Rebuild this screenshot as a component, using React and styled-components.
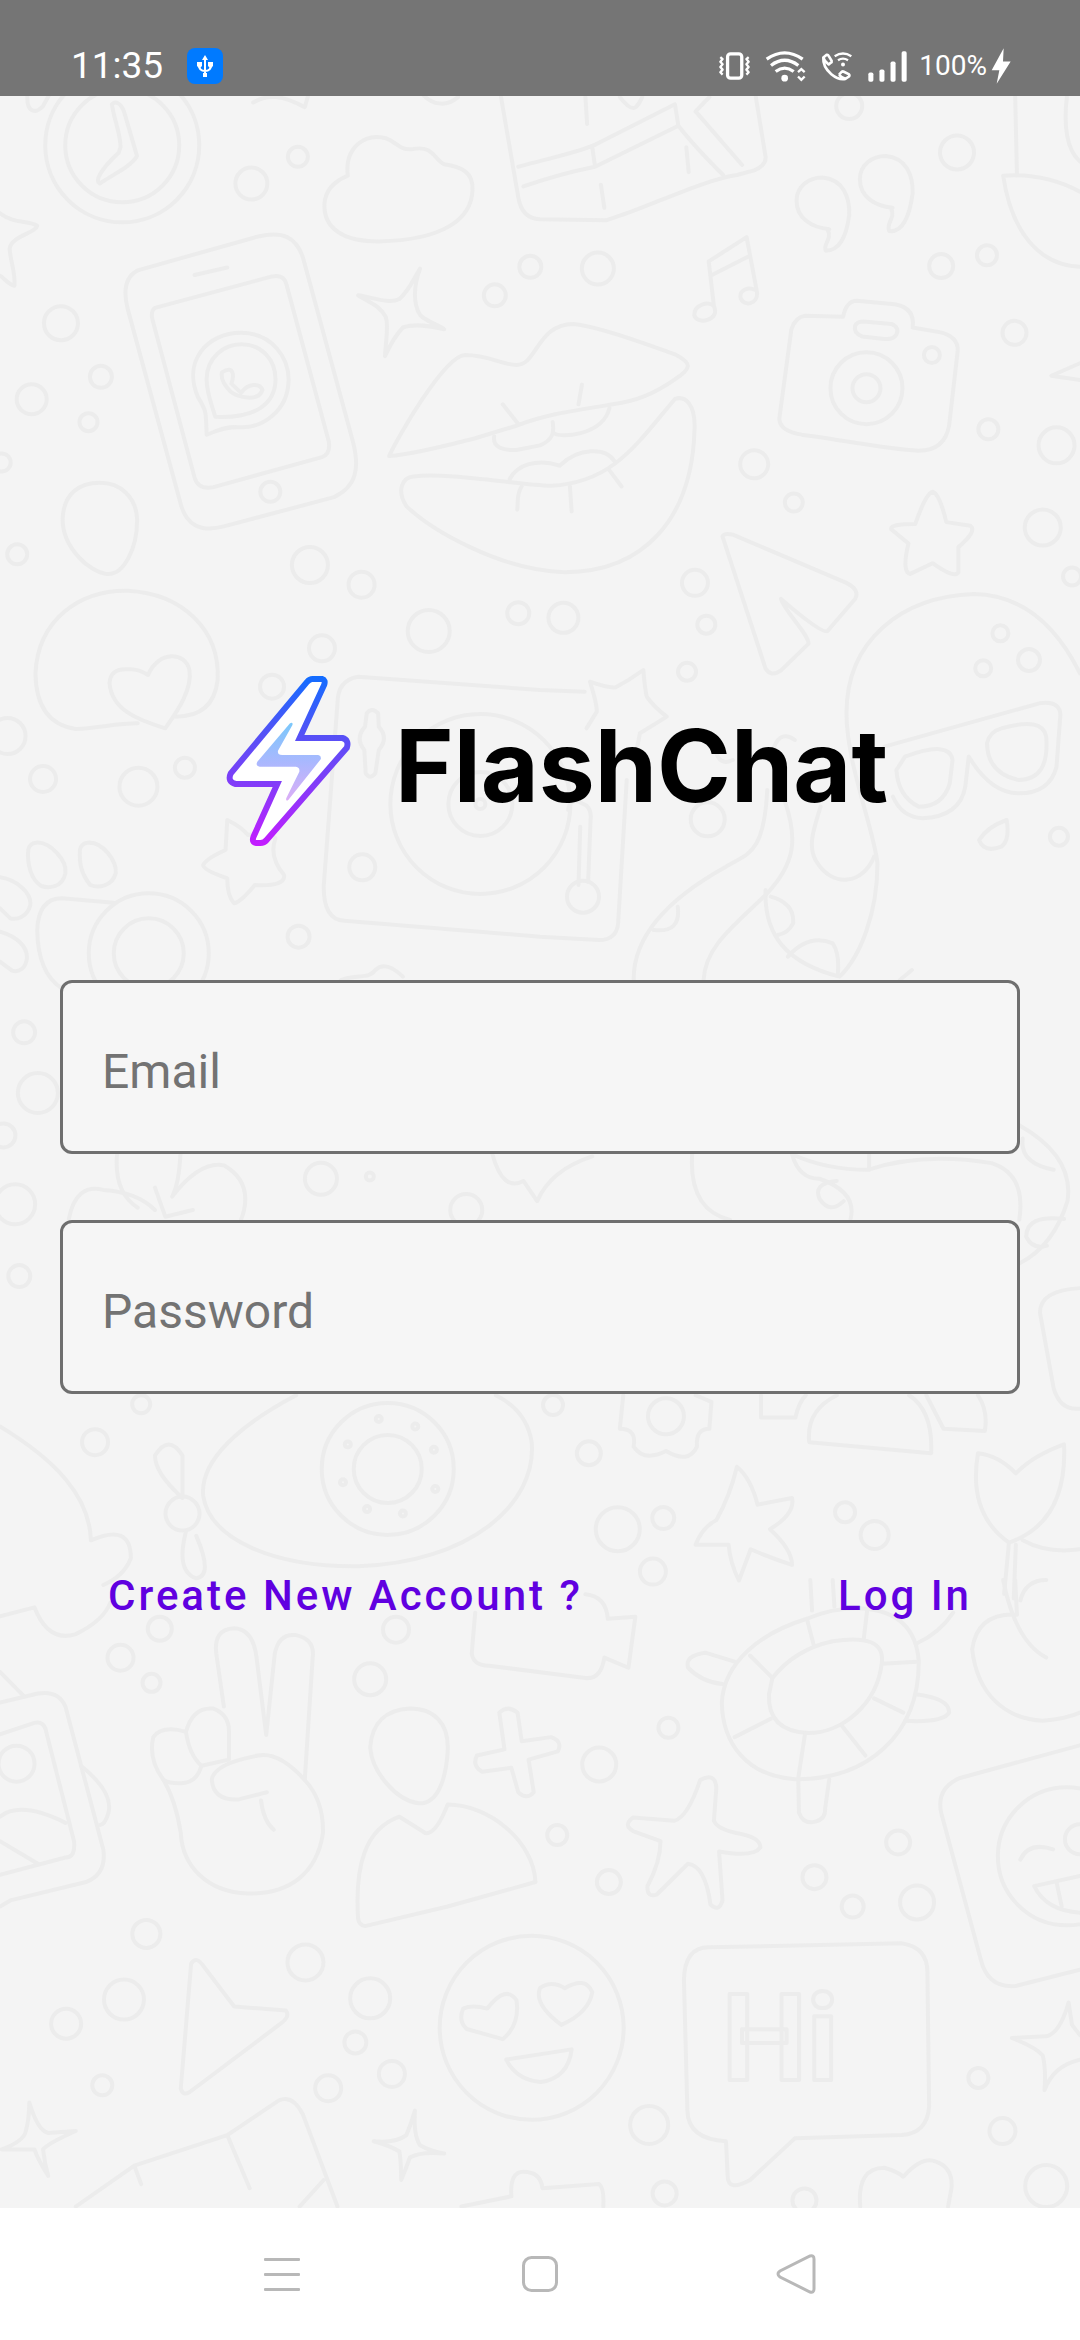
import React from "react";
import styled, { createGlobalStyle } from "styled-components";

const GlobalStyle = createGlobalStyle`
  *, *::before, *::after { box-sizing: border-box; }
  body {
    margin: 0;
    background: #f4f4f4;
    font-family: Roboto, "Noto Sans", sans-serif;
  }
`;

const Screen = styled.div`
  display: flex;
  flex-direction: column;
  min-height: 100vh;
`;

const StatusBar = styled.header`
  display: flex;
  align-items: center;
  justify-content: space-between;
  height: 96px;
  padding: 36px 69px 0 71px;
  background: #757575;
  color: #fff;
`;

const StatusGroup = styled.div`
  display: flex;
  align-items: center;
  gap: ${(p) => p.$gap}px;
`;

const Clock = styled.time`
  font-size: 37px;
  line-height: 60px;
`;

const Battery = styled.span`
  font-size: 28px;
  line-height: 60px;
`;

const Icon = styled.svg`
  display: block;
  flex: none;
  width: ${(p) => p.$w}px;
  height: ${(p) => p.$h}px;
  overflow: visible;
`;

const Main = styled.main`
  position: relative;
  flex: 1;
  overflow: hidden;
`;

const Backdrop = styled.svg`
  position: absolute;
  inset: 0;
  width: 100%;
  height: 100%;
  fill: none;
  stroke: #ececec;
  stroke-width: 4px;
  stroke-linecap: round;
  stroke-linejoin: round;

  path, ellipse { vector-effect: non-scaling-stroke; }
`;

const Greeting = styled.text`
  font-family: Roboto, "Liberation Sans", sans-serif;
  font-size: 120px;
  font-weight: 700;
`;

const Content = styled.form`
  position: relative;
  display: flex;
  flex-direction: column;
  padding: 580px 60px 120px;
`;

const Brand = styled.div`
  display: flex;
  align-items: flex-end;
  gap: 44px;
  padding-left: 167px;
`;

const Wordmark = styled.h1`
  margin: 0;
  color: #000;
  font-family: Inter, "Open Sans", sans-serif;
  font-size: 100px;
  font-weight: 700;
  line-height: 160px;
`;

const Fields = styled.div`
  display: flex;
  flex-direction: column;
  gap: 66px;
  margin-top: 134px;
`;

const Field = styled.input`
  width: 100%;
  height: 174px;
  padding: 8px 39px 0;
  border: 3px solid #6f6f6f;
  border-radius: 12px;
  outline: none;
  background: #f6f6f6;
  color: #222;
  font-family: inherit;
  font-size: 48px;

  &::placeholder { color: #737373; opacity: 1; }
`;

const Actions = styled.div`
  display: flex;
  justify-content: space-between;
  margin-top: 129px;
`;

const TextButton = styled.button`
  height: 144px;
  padding: 0 48px;
  border: 0;
  background: none;
  color: #6000e0;
  font-family: inherit;
  font-size: 42px;
  font-weight: 500;
  letter-spacing: 3px;
`;

const NavBar = styled.nav`
  display: flex;
  align-items: center;
  justify-content: center;
  gap: 174px;
  height: 132px;
  background: #fff;
`;

const NavButton = styled.button`
  display: grid;
  place-items: center;
  width: 84px;
  height: 84px;
  padding: 0;
  border: 0;
  background: none;
  color: #b8b8b8;
`;

/* Doodle sheets: each has an origin on the 1080-wide canvas and its own drawing
   units; dots are [cx, cy, radius in canvas pixels]. */
const sheets = [
  {
    x: 0, y: 90, sx: 2.904, sy: 2.8,
    dots: [
      [355, 155, 77], [355, 155, 57], [730, 262, 16], [865, 187, 10], [177, 653, 17], [92, 866, 15],
      [293, 803, 11], [257, 930, 9], [5, 1043, 9], [50, 1300, 10], [1540, 495, 11], [1437, 575, 11],
      [900, 1330, 18], [1050, 1385, 13], [1245, 1515, 21], [1505, 1465, 11], [785, 1125, 10],
    ],
    paths: [
      "M325 40C335 30 350 35 360 60L398 185C380 215 330 235 290 262C275 255 290 225 345 175L350 160C350 120 330 80 325 40",
      "M80 10C75 60 100 70 125 45L145 10M735 35C780 10 820 15 885 48L895 15M1230 15C1260 45 1300 45 1330 20",
      "M1010 240C1000 160 1060 120 1120 135C1160 150 1160 170 1200 165C1260 155 1260 195 1290 208C1340 215 1375 230 1372 280C1370 360 1290 420 1100 424C1000 424 940 390 942 320C945 270 985 250 1010 240Z",
      "M0 345C40 375 80 365 108 380C105 400 30 410 28 445C30 480 45 510 42 548C25 545 10 525 0 520",
      "M400 505L750 410C820 395 860 410 880 470L1025 985C1045 1060 1035 1110 970 1140L650 1222C580 1240 540 1215 525 1160L370 610C355 550 370 520 400 505Z",
      "M450 610L790 522Q825 515 832 545L955 985Q960 1020 935 1028L620 1112Q575 1120 565 1085L442 640Q438 618 450 610ZM565 518L660 497",
      "M600 965C598 900 600 900 575 860C530 760 600 680 700 680C790 680 840 750 838 815C835 900 760 950 690 944C650 943 630 955 600 965Z",
      "M625 915C615 880 600 850 600 810C600 750 650 712 700 712C760 712 800 755 800 810C800 880 740 920 625 915Z",
      "M645 790C680 770 680 800 672 822L700 848C720 820 755 820 762 840C750 875 690 860 670 845C645 820 640 805 645 790Z",
      "M1220 500C1200 550 1200 600 1220 630C1240 650 1270 655 1290 670C1250 660 1200 655 1170 665C1145 690 1130 720 1118 745C1120 700 1130 660 1120 635C1100 600 1070 595 1040 575C1080 580 1130 600 1160 585C1190 560 1200 530 1220 500Z",
      "M290 1100C350 1100 395 1140 398 1200C400 1280 360 1360 310 1355C260 1350 180 1280 182 1200C185 1130 230 1100 290 1100Z",
      "M1130 1025C1150 980 1290 745 1350 742C1420 742 1460 770 1500 770C1560 770 1560 655 1665 655C1740 660 1900 720 1960 740C2010 765 2010 780 1960 810C1900 850 1850 870 1780 880C1650 900 1580 910 1500 940L1380 975C1300 995 1200 1020 1130 1025Z",
      "M1960 865C1990 855 2020 880 2017 950C2010 1200 1870 1350 1640 1350C1450 1345 1250 1230 1180 1165C1150 1120 1170 1085 1200 1082C1300 1070 1500 1105 1600 1108C1780 1100 1850 990 1960 865Z",
      "M1435 970C1430 1000 1460 1010 1500 1008L1568 995C1605 980 1610 960 1605 930M1608 960C1620 975 1750 970 1770 890M1480 1090C1500 1050 1560 1030 1625 1052C1680 1000 1760 1000 1785 1040",
      "M1460 880L1505 935M1515 1110C1500 1130 1505 1150 1502 1175M1690 825L1680 880M1655 1110L1660 1180M1770 1065L1805 1110",
      "M1455 20L1505 300Q1515 360 1568 362L1760 365L1800 352C1900 320 2050 250 2140 238L2190 225Q2230 210 2222 180L2195 20",
      "M1505 215C1600 190 1700 170 1735 150L1960 40L1970 100L1728 215C1650 230 1580 250 1520 270M1970 100C2010 150 2050 190 2100 238M2060 20L2020 60L2155 210M1720 160L1728 215",
      "M1745 265L1755 330M1993 160L2000 230M1700 20L1705 95M1800 20C1840 70 1850 50 1865 20",
    ],
  },
  {
    x: 540, y: 90, sx: 2.904, sy: 2.8,
    dots: [
      [168, 500, 16], [1211, 175, 17], [1165, 493, 12], [1298, 463, 10], [1378, 680, 12], [1302, 950, 10],
      [1500, 995, 18], [1460, 1225, 18], [1545, 1362, 9], [622, 1048, 14], [737, 1155, 9], [450, 1380, 13],
      [483, 1497, 9], [68, 1478, 15], [898, 45, 13], [1138, 742, 8], [948, 835, 36], [948, 835, 14],
    ],
    paths: [
      "M840 390C790 385 745 360 745 310C745 270 780 245 820 245C880 250 900 300 898 350C890 410 870 450 830 450C820 430 850 420 835 390",
      "M1024 330C974 325 929 300 929 250C929 210 964 185 1004 185C1064 190 1084 240 1082 290C1074 350 1054 400 1014 395C1004 370 1034 360 1019 330",
      "M1380 20L1385 235M1530 20C1520 100 1530 170 1568 200M1568 285C1500 250 1420 235 1345 240C1370 400 1450 490 1568 495M1568 765L1485 800L1568 812",
      "M505 605C525 645 455 660 448 630C448 600 490 590 505 605L490 480L600 412L630 565C635 600 590 610 582 580C580 560 605 550 625 560M495 520L608 465",
      "M695 920L730 670Q742 635 770 632L880 635Q890 590 920 590L1030 600Q1090 610 1082 665L1160 678Q1215 690 1213 730L1188 940Q1175 1010 1100 1010C1000 1005 850 975 760 965Q695 955 695 920Z",
      "M940 648L1020 655Q1045 665 1035 685Q1025 700 1000 697L935 690Q910 680 915 660Q920 648 940 648Z",
      "M1140 1125Q1160 1130 1180 1210L1250 1220Q1270 1235 1215 1280L1215 1350Q1205 1370 1140 1325L1075 1355Q1050 1350 1070 1270L1020 1230Q1015 1215 1090 1215Q1120 1130 1140 1125Z",
      "M530 1250Q535 1240 560 1245L890 1380Q930 1400 915 1425L835 1515Q820 1525 700 1425C710 1460 778 1520 780 1550L700 1625Q670 1645 655 1620Z",
    ],
  },
  {
    x: 0, y: 580, sx: 2.904, sy: 3,
    dots: [
      [22, 468, 18], [125, 597, 13], [402, 620, 19], [537, 563, 10], [790, 320, 12], [935, 205, 13],
      [867, 1070, 11], [1052, 862, 13],
      [432, 1120, 60], [432, 1120, 35], [1395, 672, 90], [1395, 672, 32], [1395, 672, 5], [1693, 950, 16],
    ],
    paths: [
      "M105 788C145 785 195 840 190 880C180 925 140 925 120 918C90 900 78 850 82 810Q85 790 105 788ZM255 788C300 785 340 845 336 880C325 920 285 925 262 915C235 880 230 850 232 810Q235 790 255 788Z",
      "M0 892C50 900 92 940 88 975C80 1010 50 1020 30 1015L0 985M0 1055C50 1070 80 1100 78 1135C75 1165 55 1178 35 1172L0 1145",
      "M1065 400Q1080 380 1098 400L1100 440Q1130 475 1100 510L1090 580Q1075 600 1062 580L1058 510Q1030 475 1060 440Z",
      "M400 430C340 430 280 445 220 447Q105 430 103 280C110 120 230 30 370 32C530 40 640 150 632 300Q620 410 510 410",
      "M370 268Q320 265 318 310C325 390 400 420 480 445C510 400 560 330 550 270C540 215 460 210 430 285Q400 265 370 268Z",
      "M180 1225Q110 1180 108 1050Q112 955 180 955L330 968",
      "M660 720Q700 740 720 765Q780 750 800 775Q780 830 825 885Q830 920 740 915Q700 965 680 970Q660 950 660 895Q590 870 590 855Q600 835 655 810Z",
      "M1698 335L1568 330L1040 290Q980 300 980 370L940 920Q940 1020 1000 1022L1568 1070L1740 1080Q1790 1080 1795 1030L1820 600",
      "M1650 690Q1655 650 1690 670Q1720 680 1715 720L1708 905M1680 915L1685 740M990 1200C1040 1180 1070 1200 1090 1170Q1120 1140 1170 1190",
    ],
  },
  {
    x: 540, y: 580, sx: 2.904, sy: 3,
    dots: [[427, 275, 9], [487, 718, 17], [1337, 160, 8], [1420, 240, 11], [1287, 265, 8], [1507, 770, 9]],
    paths: [
      "M135 445L165 395Q165 370 145 305Q200 325 220 322Q260 300 300 270Q305 330 310 350Q330 380 368 410Q330 435 290 460Q285 490 280 510",
      "M1568 280C1520 180 1430 45 1260 42C1050 50 890 180 890 400C890 550 970 750 980 850C980 1000 930 1130 870 1190C720 1150 650 1070 655 930",
      "M1000 500L1450 370Q1520 360 1510 420L1500 560Q1480 640 1390 640Q1310 640 1245 530L1235 620Q1220 710 1110 715Q1050 710 1025 650",
      "M1060 530Q1190 480 1198 540L1190 610Q1170 680 1100 680Q1040 650 1035 570ZM1340 445Q1460 410 1470 470Q1480 600 1390 600Q1300 580 1298 490Q1305 455 1340 445Z",
      "M1275 780Q1300 740 1355 720Q1365 780 1340 800Q1290 820 1275 780Z",
      "M660 630C650 830 600 820 540 860C400 940 270 1050 272 1200M710 660C750 780 740 850 660 940C560 1040 480 1100 475 1200M815 680C790 760 780 800 800 840C850 930 940 910 970 830",
      "M330 1050Q410 1060 400 980M670 950Q740 970 735 1030Q720 1060 690 1065M720 1130Q780 1060 850 1090Q870 1120 865 1180M1045 1200L1080 1170M680 500Q700 450 740 480M510 510Q520 560 560 540",
    ],
  },
  {
    x: 0, y: 960, sx: 1.452, sy: 2.24,
    dots: [
      [35, 162, 11], [55, 298, 20], [5, 393, 12], [22, 547, 20], [28, 708, 11], [205, 995, 9], [138, 1080, 13],
      [466, 490, 16], [537, 485, 4], [677, 560, 16], [803, 997, 10], [855, 1105, 12], [897, 1275, 22],
      [963, 1250, 11], [948, 1370, 13], [1227, 1237, 10], [1270, 1288, 14], [232, 1498, 12], [175, 1563, 13],
      [575, 1500, 13], [563, 1140, 66], [563, 1140, 34], [550, 1028, 3], [603, 1045, 3], [505, 1085, 3],
      [630, 1097, 3], [498, 1170, 3], [632, 1185, 3], [533, 1230, 3], [585, 1240, 3], [265, 1240, 17],
      [967, 1022, 18],
    ],
    paths: [
      "M100 580Q110 500 150 515Q200 520 225 560M170 435Q165 520 200 555M262 435Q260 500 250 530Q290 450 325 460Q370 500 350 582M225 510L240 575L280 560",
      "M715 435Q730 520 760 495L780 540Q800 470 860 440",
      "M1005 435Q1000 560 1060 582M1235 580Q1245 520 1190 490Q1160 490 1150 435Q1200 470 1260 470Q1340 430 1440 455Q1490 480 1480 582M1480 370Q1560 440 1550 540Q1530 640 1480 680",
      "M1215 495Q1180 500 1190 535Q1205 570 1225 540M1485 400Q1480 455 1530 470M1545 580Q1490 570 1490 620Q1500 650 1520 640M1262 435L1262 470",
      "M1568 735Q1510 740 1510 790L1530 960Q1540 1010 1568 1005",
      "M430 975C350 1040 290 1120 295 1200C305 1300 400 1360 520 1358C680 1350 780 1220 772 1080Q765 1010 720 975",
      "M265 1205Q225 1150 225 1110Q245 1060 265 1110ZM270 1280Q255 1370 285 1385Q310 1380 285 1290",
      "M0 1045C80 1120 130 1200 132 1300Q190 1260 190 1340Q180 1380 150 1400M0 1470L50 1450Q70 1530 110 1510Q150 1480 160 1440",
      "M905 975L900 1050Q925 1050 920 1090Q935 1125 967 1100Q1000 1130 1012 1090Q1010 1050 1030 1050L1033 990L1010 975",
      "M1105 975L1105 1025L1155 1025Q1160 990 1170 975M1215 975Q1170 1010 1175 1080L1352 1105Q1355 1010 1320 975M1345 975L1370 1050L1430 1055Q1435 1010 1420 975",
      "M1070 1135Q1090 1160 1100 1220L1150 1205Q1155 1240 1118 1275Q1150 1320 1150 1355Q1120 1340 1090 1320L1073 1390Q1060 1350 1058 1310L1010 1310Q1020 1270 1040 1255Q1060 1200 1070 1135Z",
      "M1475 1150Q1450 1110 1420 1105Q1405 1240 1465 1305Q1550 1260 1545 1085Q1500 1110 1475 1150M1465 1305L1458 1420M1475 1310L1472 1430M1568 1320Q1520 1330 1485 1300",
    ],
  },
  {
    x: 0, y: 1580, sx: 2.904, sy: 2.45,
    dots: [
      [440, 252, 9], [1075, 243, 16], [425, 867, 14], [360, 1028, 20], [192, 1087, 15], [297, 1238, 10],
      [887, 937, 18], [1075, 1025, 20], [1032, 1133, 11], [1138, 1210, 13], [953, 1245, 13], [48, 450, 18],
      [1544, 1097, 92],
    ],
    paths: [
      "M0 300L110 278Q170 270 190 310L300 660Q310 720 250 740L30 785L0 800M0 378L100 350Q130 345 135 375L215 640Q220 680 190 680L0 722M0 580Q60 540 190 595M0 640L110 695",
      "M235 455Q330 520 315 570Q305 600 290 600M0 225L70 285",
      "M650 310L628 180Q620 120 680 118Q735 120 745 190L773 380L798 180Q810 130 860 135Q915 145 908 190L885 490Q940 540 938 620C920 720 840 770 720 768C600 765 530 700 525 620Q510 540 475 490Q430 440 445 385Q470 355 540 372Q560 310 620 315Q665 330 665 370L665 440L585 455Q550 430 540 372",
      "M585 455Q570 500 520 498Q490 498 475 490M885 490Q810 420 750 430Q620 450 615 490Q620 540 690 538L775 520M758 540Q765 590 795 612",
      "M1190 315C1260 315 1305 350 1300 420C1295 490 1270 550 1215 547C1150 540 1080 470 1075 410C1080 350 1120 318 1190 315Z",
      "M1040 830C1030 700 1060 610 1160 580L1235 620Q1265 625 1300 550C1420 550 1550 640 1555 740L1300 800L1060 848Q1042 845 1040 830Z",
      "M1450 325Q1475 305 1503 325L1515 395L1600 385Q1635 395 1620 420L1535 440L1550 520Q1530 540 1505 520L1485 460L1400 470Q1370 455 1385 430L1465 415Z",
      "M1380 80L1370 180Q1375 210 1420 210L1700 240Q1745 245 1755 190L1825 215L1845 90L1765 95Q1760 40 1700 35",
      "M555 940Q570 920 590 945L680 1045L830 1055Q845 1070 810 1090L550 1255Q530 1265 525 1245Z",
      "M85 1280Q110 1350 140 1355L220 1350Q140 1380 125 1395Q130 1430 140 1460Q110 1420 100 1395L5 1395Q70 1375 75 1350Q85 1320 85 1280Z",
      "M1205 1300Q1200 1360 1220 1385Q1250 1400 1290 1405Q1220 1400 1190 1415Q1180 1440 1165 1470Q1165 1430 1160 1400Q1130 1385 1085 1375Q1150 1380 1180 1360Q1195 1330 1205 1300Z",
      "M220 1535L390 1435L660 1360L810 1275Q850 1260 880 1310L980 1535M390 1435L410 1480M660 1360L725 1490M940 1470L870 1535",
      "M1340 1535L1485 1510Q1480 1450 1520 1450Q1570 1450 1575 1490L1740 1480Q1755 1490 1752 1535",
      "M1345 1050Q1370 1040 1415 1050Q1470 990 1500 1030Q1510 1090 1460 1125L1355 1100Q1330 1080 1345 1050ZM1568 1000Q1600 980 1640 1000Q1700 970 1720 1010Q1710 1060 1630 1090Q1550 1040 1568 1000Z",
      "M1470 1175L1660 1150Q1650 1220 1570 1230Q1500 1225 1470 1175Z",
    ],
  },
  {
    x: 540, y: 1580, sx: 2.904, sy: 2.45,
    dots: [
      [373, 362, 10], [172, 452, 17], [50, 625, 10], [200, 740, 12], [1040, 643, 12], [797, 728, 12],
      [908, 800, 11], [1095, 790, 17], [317, 1335, 19], [362, 1503, 12], [768, 1520, 12], [1273, 1220, 10],
      [1343, 1350, 13], [1470, 1485, 21], [1530, 677, 69], [1568, 635, 15],
    ],
    paths: [
      "M775 95Q860 65 940 70Q1090 80 1100 200C1100 380 950 490 740 488C600 480 530 400 528 300C535 200 640 130 775 95Z",
      "M675 240Q740 170 850 150Q1000 130 993 200C980 310 870 375 780 375Q660 370 665 280Z",
      "M610 185L675 240M565 385L670 340M770 375L750 485M875 355L945 430M970 290L1055 325M993 205L1095 200M940 145L950 75M795 160L775 95",
      "M565 200L480 178Q420 185 430 215Q470 250 530 255M750 488L752 570Q765 600 800 592Q830 585 828 560L840 488M1090 280Q1190 290 1188 325Q1170 350 1060 345M1095 155Q1160 130 1200 80M790 75L785 0M855 65L850 0",
      "M1568 325Q1530 340 1460 345C1350 340 1270 280 1255 170Q1270 80 1385 85L1380 0M1345 0Q1380 150 1470 190M1395 50Q1410 0 1470 0",
      "M465 490Q510 470 512 510L505 590Q515 610 570 620Q640 630 640 655Q620 680 520 665L530 785Q520 815 495 795Q480 700 430 695L340 770Q310 780 312 750Q350 690 350 640L270 615Q240 600 270 582L390 590Q430 580 465 490Z",
      "M1568 405L1220 485Q1150 510 1165 570L1280 930Q1300 1000 1380 995L1568 955M1395 685Q1420 640 1490 660M1568 725L1435 750Q1470 810 1568 815M1500 740L1515 800",
      "M490 900L1050 890Q1125 900 1125 960L1130 1290Q1125 1355 1050 1360L740 1368L610 1470Q545 1500 545 1460L540 1375Q430 1370 428 1300L418 980Q420 900 490 900Z",
      "M930 1535Q920 1440 1000 1440Q1040 1450 1055 1462Q1110 1410 1150 1425Q1200 1440 1195 1490L1185 1535",
      "M1568 1115L1545 1090L1535 1035Q1510 1110 1470 1118L1370 1122Q1440 1145 1460 1165Q1470 1200 1465 1250Q1490 1190 1568 1175",
    ],
  },
];

function DoodleSheet({ sheet }) {
  const { x, y, sx, sy, dots, paths } = sheet;
  return (
    <g transform={`translate(${x} ${y}) scale(${1 / sx} ${1 / sy})`}>
      {dots.map(([cx, cy, r], i) => (
        <ellipse key={i} cx={cx} cy={cy} rx={r * sx} ry={r * sy} />
      ))}
      {paths.map((d) => (
        <path key={d} d={d} />
      ))}
    </g>
  );
}

function DoodleBackdrop() {
  return (
    <Backdrop viewBox="0 96 1080 2112" preserveAspectRatio="xMidYMin slice" aria-hidden="true">
      {sheets.map((sheet, i) => (
        <DoodleSheet key={i} sheet={sheet} />
      ))}
      <Greeting x="722" y="2080">Hi</Greeting>
    </Backdrop>
  );
}

function UsbIcon() {
  return (
    <Icon $w={36} $h={36} viewBox="0 0 36 36" aria-label="USB connected" role="img">
      <rect width="36" height="36" rx="8" fill="#007aff" />
      <g fill="none" stroke="#fff" strokeWidth="2">
        <path d="M18 10V28M12 17Q12 23 18 23Q24 23 24 17" />
      </g>
      <path fill="#fff" d="M18 7L21 12H15ZM10 14h5v4l-2 2h-1l-2-2zM21 14h5v4l-2 2h-1l-2-2zM16 25h4v4h-4z" />
    </Icon>
  );
}

function VibrateIcon() {
  return (
    <Icon $w={31} $h={28} viewBox="78 66 94 84" fill="none" stroke="#fff" strokeLinejoin="round" aria-hidden="true">
      <rect x="104" y="71" width="43" height="74" rx="9" strokeWidth="10" />
      <path strokeWidth="7" d="M82 81l7 6-7 8 7 8-7 8 7 8-7 8 7 7M168 81l-7 6 7 8-7 8 7 8-7 8 7 8-7 7" />
    </Icon>
  );
}

function WifiIcon() {
  return (
    <Icon $w={40} $h={31} viewBox="232 62 120 92" fill="none" stroke="#fff" aria-hidden="true">
      <path strokeWidth="10" d="M234 86Q288 48 342 86M247 105Q288 74 329 105M261 123Q288 103 315 123" />
      <circle cx="288" cy="143" r="10" fill="#fff" stroke="none" />
      <path strokeWidth="7" d="M328 125l10-9 10 9M328 138l10 10 10-10" />
    </Icon>
  );
}

function WifiCallIcon() {
  return (
    <Icon $w={30} $h={29} viewBox="396 68 90 86" fill="none" stroke="#fff" strokeLinejoin="round" aria-hidden="true">
      <path strokeWidth="8" d="M400 84L410 76Q414 75 416 79L425 94Q426 98 422 100L416 105Q403 95 400 84ZM400 84Q398 112 424 134Q446 152 466 148L477 141Q480 137 476 134L460 126Q456 125 453 129L447 136M447 136Q455 144 466 148" />
      <path strokeWidth="7" d="M434 80Q459 64 484 80M444 92Q459 83 474 92" />
      <circle cx="459" cy="105" r="6" fill="#fff" stroke="none" />
    </Icon>
  );
}

function SignalIcon() {
  return (
    <Icon $w={39} $h={31} viewBox="536 62 116 92" fill="#fff" aria-hidden="true">
      <rect x="537" y="126" width="15" height="27" rx="5" />
      <rect x="570" y="117" width="15" height="36" rx="5" />
      <rect x="603" y="93" width="15" height="60" rx="5" />
      <rect x="636" y="63" width="15" height="90" rx="5" />
    </Icon>
  );
}

function ChargingIcon() {
  return (
    <Icon $w={20} $h={36} viewBox="905 55 60 107" fill="#fff" aria-hidden="true">
      <path d="M943 55L907 121H930L922 162L964 95H941Z" />
    </Icon>
  );
}

function FlashLogo() {
  return (
    <Icon $w={124} $h={170} viewBox="660 288 360 510" preserveAspectRatio="none" aria-hidden="true">
      <defs>
        <linearGradient id="bolt-edge" gradientUnits="userSpaceOnUse" x1="0" y1="288" x2="0" y2="798">
          <stop offset="0" stopColor="#126dff" />
          <stop offset=".35" stopColor="#5651f6" />
          <stop offset=".6" stopColor="#7c3ff8" />
          <stop offset="1" stopColor="#c41cff" />
        </linearGradient>
        <linearGradient id="bolt-core" x1="0" y1="0" x2="0" y2="1">
          <stop offset="0" stopColor="#7bc8fb" />
          <stop offset=".5" stopColor="#a9b8fe" />
          <stop offset="1" stopColor="#dcaef6" />
        </linearGradient>
      </defs>
      <path
        fill="#fff"
        stroke="url(#bolt-edge)"
        strokeWidth="6"
        vectorEffect="non-scaling-stroke"
        d="M908 297L936 297Q947 300 942 315L871 474L995 474Q1015 480 1008 503L775 780Q768 789 757 789L745 789Q731 787 737 770L806 612L685 612Q660 605 671 580L893 305Q900 297 908 297Z"
      />
      <path
        fill="url(#bolt-core)"
        d="M843 430Q852 425 850 435L808 512Q806 525 820 525L925 525Q935 528 932 538L838 660Q830 665 832 655L870 575Q872 562 860 560L755 560Q742 558 748 545Z"
      />
    </Icon>
  );
}

export default function App() {
  return (
    <>
      <GlobalStyle />
      <Screen>
        <StatusBar>
          <StatusGroup $gap={24}>
            <Clock>11:35</Clock>
            <UsbIcon />
          </StatusGroup>
          <StatusGroup $gap={12}>
            <StatusGroup $gap={16}>
              <VibrateIcon />
              <WifiIcon />
              <WifiCallIcon />
              <SignalIcon />
            </StatusGroup>
            <StatusGroup $gap={4}>
              <Battery>100%</Battery>
              <ChargingIcon />
            </StatusGroup>
          </StatusGroup>
        </StatusBar>

        <Main>
          <DoodleBackdrop />
          <Content onSubmit={(e) => e.preventDefault()}>
            <Brand>
              <FlashLogo />
              <Wordmark>FlashChat</Wordmark>
            </Brand>
            <Fields>
              <Field type="email" placeholder="Email" aria-label="Email" />
              <Field type="password" placeholder="Password" aria-label="Password" />
            </Fields>
            <Actions>
              <TextButton type="button">Create New Account ?</TextButton>
              <TextButton type="submit">Log In</TextButton>
            </Actions>
          </Content>
        </Main>

        <NavBar aria-label="System">
          <NavButton aria-label="Recent apps">
            <Icon $w={36} $h={33} viewBox="0 0 36 33" fill="currentColor">
              <rect width="36" height="3" rx="1" />
              <rect y="15" width="36" height="3" rx="1" />
              <rect y="30" width="36" height="3" rx="1" />
            </Icon>
          </NavButton>
          <NavButton aria-label="Home">
            <Icon $w={36} $h={36} viewBox="0 0 36 36" fill="none" stroke="currentColor" strokeWidth="3">
              <rect x="1.5" y="1.5" width="33" height="33" rx="8" />
            </Icon>
          </NavButton>
          <NavButton aria-label="Back">
            <Icon $w={42} $h={40} viewBox="0 0 42 40" fill="none" stroke="currentColor" strokeWidth="3">
              <path d="M33 2Q37 1 37 5V35Q37 39 33 38L3 23Q-1 20 3 17Z" />
            </Icon>
          </NavButton>
        </NavBar>
      </Screen>
    </>
  );
}
